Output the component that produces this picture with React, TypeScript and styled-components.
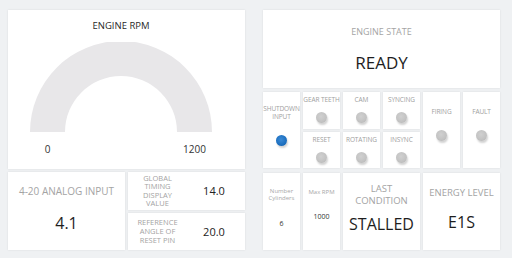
import React from 'react'
import styled, { createGlobalStyle } from 'styled-components'

const GlobalStyle = createGlobalStyle`
  html, body {
    margin: 0;
    padding: 0;
    background: #eff1f3;
    font-family: 'Open Sans', 'Noto Sans', sans-serif;
  }
`

const Page = styled.div`
  display: flex;
  gap: 18px;
  width: 512px;
  height: 258px;
  box-sizing: border-box;
  padding: 10px 11px 8px 8px;
`

const Column = styled.div`
  width: 237px;
  display: flex;
  flex-direction: column;
`

const Card = styled.div`
  background: #fff;
  box-shadow: 0 0 2px rgba(0, 0, 0, 0.09);
  box-sizing: border-box;
`

const GaugeCard = styled(Card)`
  height: 159px;
  display: flex;
  flex-direction: column;
  align-items: center;
  padding-right: 11px;
`

const GaugeTitle = styled.div`
  margin-top: 10px;
  font-size: 9.5px;
  line-height: 12px;
  color: #2a2a2a;
`

const GaugeSvg = styled.svg`
  display: block;
  margin-top: 10px;
`

const GaugeLabels = styled.div`
  width: 182px;
  display: flex;
  justify-content: space-between;
  margin-top: 10px;
`

const GaugeLabel = styled.span`
  width: 35px;
  text-align: center;
  font-size: 10px;
  line-height: 12px;
  color: #333;
`

const BottomLeft = styled.div`
  display: flex;
  gap: 3px;
  margin-top: 3px;
  height: 78px;
`

const AnalogCard = styled(Card)`
  width: 117px;
  display: flex;
  flex-direction: column;
  align-items: center;
  padding-top: 13px;
`

const MutedCaption = styled.div<{ $size: number; $lh: number }>`
  font-size: ${(p) => p.$size}px;
  line-height: ${(p) => p.$lh}px;
  color: #a4a4a4;
  text-align: center;
  text-transform: uppercase;
`

const BigValue = styled.div<{ $size: number; $mt: number }>`
  margin-top: ${(p) => p.$mt}px;
  font-size: ${(p) => p.$size}px;
  line-height: ${(p) => p.$size + 4}px;
  color: #1e1e1e;
  text-align: center;
`

const Stack = styled.div`
  width: 117px;
  display: flex;
  flex-direction: column;
  gap: 3px;
`

const PairCard = styled(Card)`
  flex: 1;
  display: grid;
  grid-template-columns: 59px 1fr;
  align-items: center;
`

const PairValue = styled.div`
  font-size: 11px;
  color: #222;
  text-align: center;
  padding-right: 4px;
`

const StateCard = styled(Card)`
  height: 78px;
  display: flex;
  flex-direction: column;
  align-items: center;
  padding-top: 16px;
`

const Grid = styled.div<{ $rows: string; $mt: number }>`
  display: grid;
  grid-template-columns: repeat(6, 37px);
  grid-template-rows: ${(p) => p.$rows};
  gap: 3px;
  margin-top: ${(p) => p.$mt}px;
`

const Cell = styled(Card)<{ $pt: number; $gap: number; $tall?: boolean; $span?: number }>`
  grid-row: ${(p) => (p.$tall ? 'span 2' : 'auto')};
  grid-column: span ${(p) => p.$span ?? 1};
  display: flex;
  flex-direction: column;
  align-items: center;
  padding-top: ${(p) => p.$pt}px;
  gap: ${(p) => p.$gap}px;
`

const CellLabel = styled.div`
  font-size: 6.5px;
  line-height: 7.5px;
  color: #a0a0a0;
  text-align: center;
  white-space: nowrap;
  letter-spacing: -0.1px;
`

const Led = styled.div<{ $on?: boolean }>`
  width: 11px;
  height: 11px;
  border-radius: 50%;
  background: ${(p) =>
    p.$on
      ? 'radial-gradient(circle at 45% 40%, #3a8ad6 0%, #1d6fbf 60%, #175a9e 100%)'
      : 'radial-gradient(circle at 45% 40%, #d0d0d0 0%, #c2c2c2 60%, #b0b0b0 100%)'};
  box-shadow: 1px 2px 2px rgba(0, 0, 0, 0.18);
`

const SmallCaption = styled.div`
  font-size: 6px;
  line-height: 7px;
  color: #a8a8a8;
  text-align: center;
`

const SmallValue = styled.div`
  font-size: 7px;
  line-height: 9px;
  color: #333;
`

const Gauge = () => (
  <GaugeSvg width="182" height="91" viewBox="0 0 182 91">
    <path
      d="M0 90 A91 91 0 0 1 182 90 L147 90 A56 56 0 0 0 35 90 Z"
      fill="#e8e7e9"
    />
  </GaugeSvg>
)

const topLeds = ['GEAR TEETH', 'CAM', 'SYNCING']
const bottomLeds = ['RESET', 'ROTATING', 'INSYNC']

const App: React.FC = () => (
  <>
    <GlobalStyle />
    <Page>
      <Column>
        <GaugeCard>
          <GaugeTitle>ENGINE RPM</GaugeTitle>
          <Gauge />
          <GaugeLabels>
            <GaugeLabel>0</GaugeLabel>
            <GaugeLabel>1200</GaugeLabel>
          </GaugeLabels>
        </GaugeCard>
        <BottomLeft>
          <AnalogCard>
            <MutedCaption $size={10} $lh={12}>4-20 Analog Input</MutedCaption>
            <BigValue $size={16} $mt={16}>4.1</BigValue>
          </AnalogCard>
          <Stack>
            <PairCard>
              <MutedCaption $size={7.5} $lh={8.6}>
                Global
                <br />
                Timing
                <br />
                Display
                <br />
                Value
              </MutedCaption>
              <PairValue>14.0</PairValue>
            </PairCard>
            <PairCard>
              <MutedCaption $size={7.5} $lh={8.6}>
                Reference
                <br />
                Angle of
                <br />
                Reset Pin
              </MutedCaption>
              <PairValue>20.0</PairValue>
            </PairCard>
          </Stack>
        </BottomLeft>
      </Column>
      <Column>
        <StateCard>
          <MutedCaption $size={9} $lh={12}>Engine State</MutedCaption>
          <BigValue $size={17} $mt={14}>READY</BigValue>
        </StateCard>
        <Grid $rows="37px 36px" $mt={4}>
          <Cell $pt={13} $gap={15} $tall>
            <CellLabel>
              SHUTDOWN
              <br />
              INPUT
            </CellLabel>
            <Led $on />
          </Cell>
          {topLeds.map((label) => (
            <Cell key={label} $pt={4} $gap={8}>
              <CellLabel>{label}</CellLabel>
              <Led />
            </Cell>
          ))}
          <Cell $pt={16} $gap={14} $tall>
            <CellLabel>FIRING</CellLabel>
            <Led />
          </Cell>
          <Cell $pt={16} $gap={14} $tall>
            <CellLabel>FAULT</CellLabel>
            <Led />
          </Cell>
          {bottomLeds.map((label) => (
            <Cell key={label} $pt={4} $gap={8}>
              <CellLabel>{label}</CellLabel>
              <Led />
            </Cell>
          ))}
        </Grid>
        <Grid $rows="77px" $mt={5}>
          <Cell $pt={15} $gap={17}>
            <SmallCaption>
              Number
              <br />
              Cylinders
            </SmallCaption>
            <SmallValue>6</SmallValue>
          </Cell>
          <Cell $pt={16} $gap={16}>
            <SmallCaption>Max RPM</SmallCaption>
            <SmallValue>1000</SmallValue>
          </Cell>
          <Cell $pt={10} $gap={3} $span={2}>
            <MutedCaption $size={9.5} $lh={12}>
              Last
              <br />
              Condition
            </MutedCaption>
            <BigValue $size={16} $mt={4}>STALLED</BigValue>
          </Cell>
          <Cell $pt={14} $gap={8} $span={2}>
            <MutedCaption $size={9.5} $lh={12}>Energy Level</MutedCaption>
            <BigValue $size={16} $mt={5}>E1S</BigValue>
          </Cell>
        </Grid>
      </Column>
    </Page>
  </>
)

export default App
